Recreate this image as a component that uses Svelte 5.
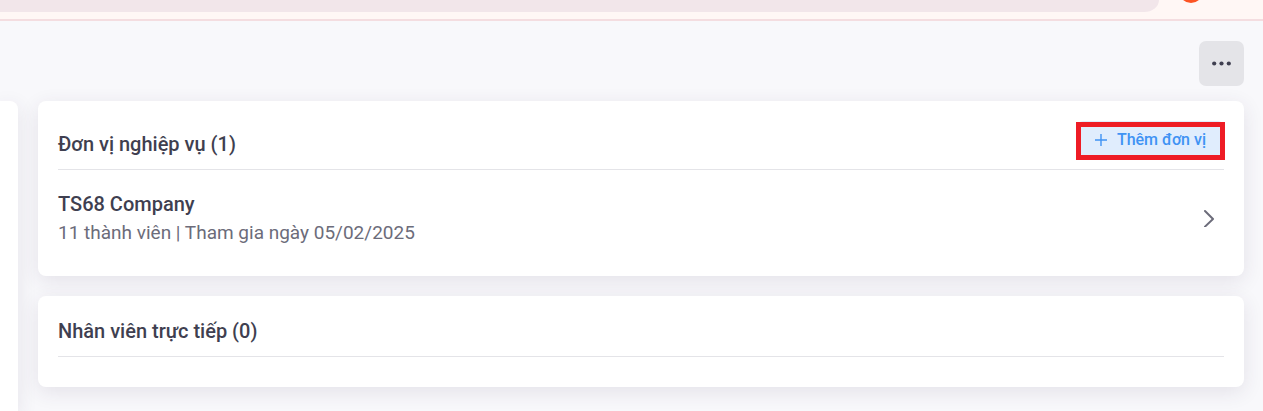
<script>
  let units = $state([{ name: 'TS68 Company', members: 11, joined: '05/02/2025' }]);
  let employees = $state([]);
</script>

<div class="page">
  <div class="topbar">
    <div class="address"></div>
    <div class="account"><span class="avatar"></span></div>
  </div>

  <div class="content">
    <aside class="side"></aside>

    <main>
      <div class="toolbar">
        <button class="more" type="button" aria-label="Menu">
          <svg width="19" height="6" viewBox="0 0 19 6" fill="currentColor" aria-hidden="true">
            <circle cx="2.2" cy="2.5" r="2.1" />
            <circle cx="9.5" cy="2.5" r="2.1" />
            <circle cx="16.8" cy="2.5" r="2.1" />
          </svg>
        </button>
      </div>

      <section class="card">
        <header>
          <h2>Đơn vị nghiệp vụ ({units.length})</h2>
          <button class="add" type="button">
            <svg width="12" height="12" viewBox="0 0 12 12" aria-hidden="true">
              <path d="M6 0V12M0 6H12" stroke="currentColor" stroke-width="1.4" />
            </svg>
            Thêm đơn vị
          </button>
        </header>
        {#each units as unit}
          <a class="unit" href="#unit">
            <div>
              <div class="name">{unit.name}</div>
              <div class="info">{unit.members} thành viên | Tham gia ngày {unit.joined}</div>
            </div>
            <svg width="12" height="18" viewBox="0 0 12 18" fill="none" aria-hidden="true">
              <path d="M2 2L10 10L2 17.6" stroke="currentColor" stroke-width="2" stroke-linecap="round" stroke-linejoin="round" />
            </svg>
          </a>
        {/each}
      </section>

      <section class="card">
        <header>
          <h2>Nhân viên trực tiếp ({employees.length})</h2>
        </header>
      </section>
    </main>
  </div>
</div>

<style>
  :global(body) {
    margin: 0;
    background: #f8f8fb;
  }
  .page {
    min-height: 100vh;
    display: flex;
    flex-direction: column;
    overflow: hidden;
    background: #f8f8fb;
    color: #3f3f50;
    font-family: Roboto, sans-serif;
  }
  .topbar {
    display: flex;
    height: 19px;
    border-bottom: 2px solid #f4dde0;
    background: #fff7f5;
    overflow: hidden;
  }
  .address {
    flex: 1;
    height: 12px;
    border-bottom-right-radius: 20px 16px;
    background: #f2e6ea;
  }
  .account {
    width: 104px;
    display: flex;
    align-items: flex-end;
    height: 3px;
  }
  .avatar {
    flex: none;
    width: 24px;
    height: 24px;
    margin-left: 20px;
    border-radius: 50%;
    background: #fc5424;
  }
  .content {
    flex: 1;
    display: flex;
    gap: 20px;
    padding-right: 19px;
  }
  .side {
    flex: none;
    width: 18px;
    margin-top: 80px;
    border-top-right-radius: 8px;
    background: #fff;
    box-shadow: 0 5px 20px rgba(60, 50, 80, 0.11);
  }
  main {
    flex: 1;
    display: flex;
    flex-direction: column;
    gap: 20px;
    padding-bottom: 24px;
  }
  .toolbar {
    display: flex;
    justify-content: flex-end;
    padding-top: 20px;
    margin-bottom: -5px;
  }
  button {
    border: none;
    font-family: inherit;
    cursor: pointer;
  }
  .more {
    display: flex;
    align-items: center;
    justify-content: center;
    width: 45px;
    height: 45px;
    padding: 0;
    border-radius: 7px;
    background: #e4e4e8;
    color: #3f3f50;
  }
  .card {
    padding: 20px 20px 30px;
    border-radius: 8px;
    background: #fff;
    box-shadow: 0 5px 20px rgba(60, 50, 80, 0.11);
  }
  header {
    display: flex;
    align-items: flex-end;
    justify-content: space-between;
    padding-bottom: 10px;
    border-bottom: 1px solid #e4e4e8;
  }
  h2,
  .name {
    margin: 0;
    font-size: 20px;
    font-weight: 500;
    line-height: 30px;
  }
  .add {
    position: relative;
    display: flex;
    align-items: center;
    gap: 10px;
    height: 38px;
    padding: 0 18px 1px;
    border-radius: 6px;
    background: #e0edfd;
    color: #3f93f4;
    font-size: 16px;
    font-weight: 500;
  }
  .add::after {
    content: '';
    position: absolute;
    inset: 1px -1px -1px;
    border: 5px solid #ee1c25;
  }
  .unit {
    display: flex;
    align-items: center;
    justify-content: space-between;
    padding: 19px 9px 0 0;
    color: #6c6c7a;
    text-decoration: none;
  }
  .name {
    color: #3f3f50;
  }
  .info {
    font-size: 19px;
    line-height: 27px;
  }
</style>
